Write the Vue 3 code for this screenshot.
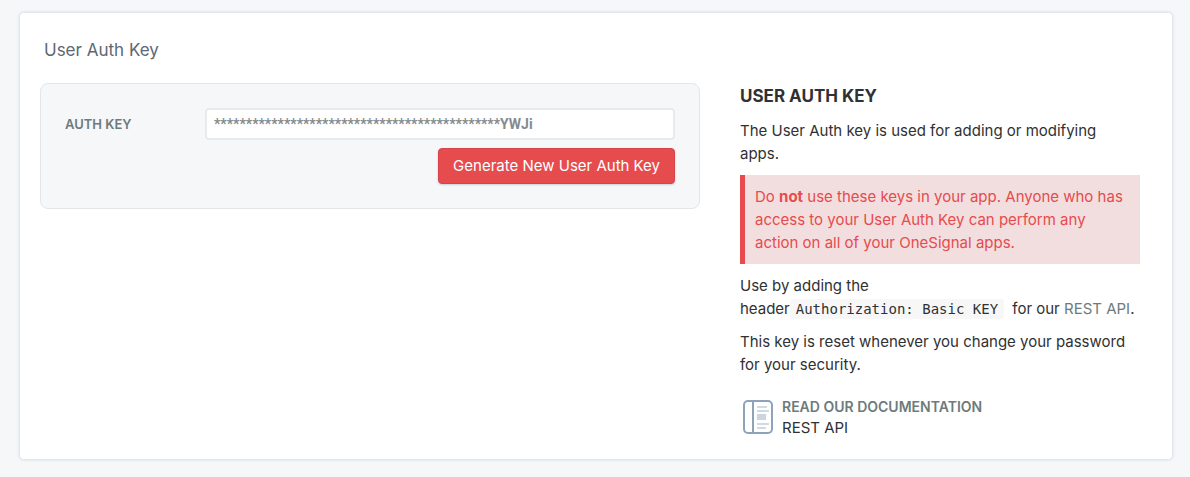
<script setup>
import { ref } from 'vue'

const authKey = ref('*'.repeat(45) + 'YWJi')
</script>

<template>
  <main class="page">
    <section class="card">
      <h1 class="card-title">User Auth Key</h1>
      <div class="columns">
        <form class="panel" @submit.prevent>
          <div class="field">
            <label class="field-label" for="auth-key">AUTH KEY</label>
            <input id="auth-key" v-model="authKey" class="field-input" type="text" readonly />
          </div>
          <button class="generate" type="button">Generate New User Auth Key</button>
        </form>
        <aside class="help">
          <h2 class="help-title">USER AUTH KEY</h2>
          <p>The User Auth key is used for adding or modifying<br />apps.</p>
          <p class="warning">
            Do <strong>not</strong> use these keys in your app. Anyone who has access to your User
            Auth Key can perform any<br />action on all of your OneSignal apps.
          </p>
          <p>
            Use by adding the
            <span class="header-name">header<code>Authorization: Basic KEY</code></span> for our
            <a class="api-link" href="#rest-api">REST API</a>.
          </p>
          <p>This key is reset whenever you change your password for your security.</p>
          <a class="docs" href="#documentation">
            <svg class="docs-icon" viewBox="0 0 30 34" aria-hidden="true">
              <rect x="1" y="1" width="28" height="32" rx="4" fill="#fff" stroke="#8ea2b9" stroke-width="2" />
              <path d="M10 1v32" stroke="#8ea2b9" stroke-width="2" />
              <path d="M14 7h10M14 11h12M14 24h12M14 28h9" stroke="#d0dae3" stroke-width="2" />
              <rect x="14" y="14" width="9" height="6" fill="#c9d5df" />
            </svg>
            <span class="docs-text">
              <span class="docs-label">READ OUR DOCUMENTATION</span>
              <span class="docs-name">REST API</span>
            </span>
          </a>
        </aside>
      </div>
    </section>
  </main>
</template>

<style>
body {
  background: #f5f7f9;
}
</style>

<style scoped>
.page {
  padding: 13px 18px 18px 20px;
  font-family: Inter, "Liberation Sans", sans-serif;
  font-size: 15px;
  line-height: 23px;
  color: #2f3133;
}
.card {
  padding: 25px 32px 21px 20px;
  background: #fff;
  border-radius: 4px;
  box-shadow: 0 0 3px 1px rgba(60, 85, 110, 0.16);
}
.card-title {
  margin: 0 0 21px 4px;
  font-size: 17px;
  line-height: 24px;
  font-weight: 400;
  color: #5c6875;
}
.columns {
  display: grid;
  grid-template-columns: 33fr 20fr;
  gap: 40px;
  align-items: start;
}
.panel {
  display: flex;
  flex-direction: column;
  gap: 8px;
  padding: 24px;
  background: #f5f7f9;
  border: 1px solid #e3e7e9;
  border-radius: 8px;
}
.field {
  display: flex;
  align-items: center;
}
.field-label {
  flex: 0 0 140px;
  font-size: 13px;
  font-weight: 600;
  color: #6d7b7b;
}
.field-input {
  flex: 1;
  min-width: 0;
  height: 32px;
  box-sizing: border-box;
  padding: 0 7px;
  border: 2px solid #e8eaec;
  border-radius: 4px;
  background: #fff;
  font-family: Roboto, "Liberation Sans", sans-serif;
  font-size: 14px;
  font-weight: 700;
  color: #848a8d;
}
.generate {
  align-self: flex-end;
  padding: 5px 14px;
  border: 1px solid #d4444a;
  border-radius: 4px;
  background: #e64b4e;
  box-shadow: 0 1px 2px rgba(30, 50, 70, 0.2);
  font-family: inherit;
  font-size: 15px;
  line-height: 24px;
  color: #fff;
}
.help p {
  margin: 0 0 10px;
}
.help-title {
  margin: 0 0 9px;
  font-size: 17px;
  line-height: 27px;
  font-weight: 700;
}
.help .warning {
  padding: 10px;
  border-left: 5px solid #e64b4e;
  background: #f2dede;
  color: #e64b4e;
}
.warning strong {
  font-weight: 700;
}
.header-name {
  white-space: nowrap;
}
code {
  margin-right: 4px;
  padding: 2px 6px;
  border-radius: 3px;
  background: #f7f7f7;
  font-family: "DejaVu Sans Mono", monospace;
  font-size: 14px;
  line-height: 1;
}
a {
  color: inherit;
  text-decoration: none;
}
.api-link {
  color: #6d7b7b;
}
.docs {
  display: flex;
  align-items: center;
  gap: 9px;
  margin-top: 20px;
  padding-left: 3px;
}
.docs-icon {
  width: 30px;
  height: 34px;
}
.docs-text {
  display: flex;
  flex-direction: column;
  line-height: 21px;
}
.docs-label {
  font-size: 14px;
  font-weight: 600;
  color: #6d7b7b;
}
</style>
